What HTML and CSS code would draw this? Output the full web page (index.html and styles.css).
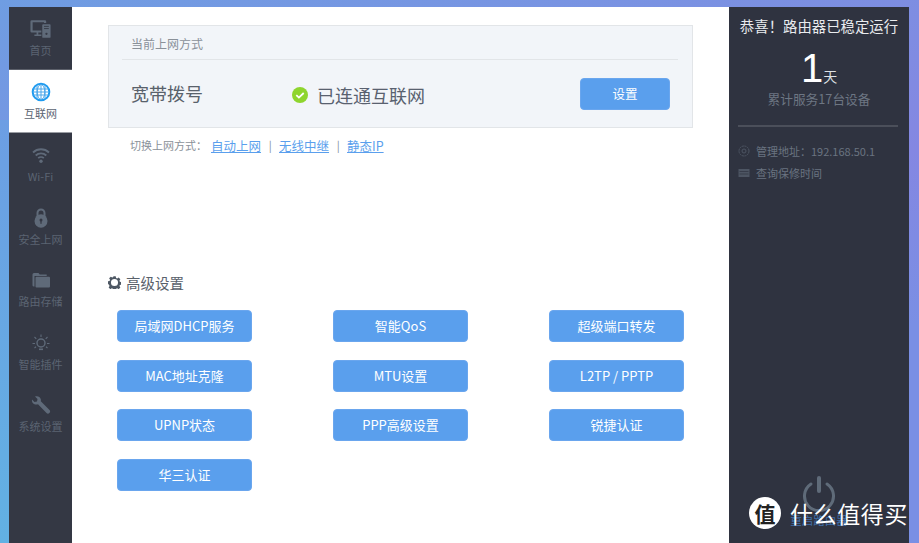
FILE: index.html
```html
<!DOCTYPE html>
<html lang="zh">
<head>
<meta charset="utf-8">
<title>互联网</title>
<link rel="stylesheet" href="styles.css">
</head>
<body>
<div class="app">
  <nav class="side">
    <a class="nav-item">
      <svg class="nav-icon" viewBox="0 0 24 22"><path class="fill" d="M2 1h15a1.500 1.500 0 0 1 1.500 1.500V4H16V3.300H3v9.400h10v2.400H9.500v2.200h3.500v1.700H5v-1.700h2.500v-2.200H2A1.500 1.500 0 0 1 .5 13.500V2.500A1.500 1.500 0 0 1 2 1z"/><path class="fill" d="M15 5.500h7.500a1 1 0 0 1 1 1V20a1 1 0 0 1-1 1H15a1 1 0 0 1-1-1V6.500a1 1 0 0 1 1-1z"/><path d="M16 8h5.500M16 10.500h5.500" stroke="#343844" stroke-width="1"/><circle cx="18.800" cy="16.500" r="1.300" fill="#343844"/></svg>
      <span>首页</span>
    </a>
    <a class="nav-item active">
      <svg class="nav-icon" viewBox="0 0 20 20"><circle cx="10" cy="10" r="8.300" fill="none" stroke="#1e9bf0" stroke-width="2"/><g fill="none" stroke="#4ba6ea" stroke-width="1"><ellipse cx="10" cy="10" rx="3.800" ry="7.500"/><path d="M10 2v16M2.500 7h15M2.500 10h15M2.500 13h15M6 3.500v13M14 3.500v13"/></g></svg>
      <span>互联网</span>
    </a>
    <a class="nav-item">
      <svg class="nav-icon" viewBox="0 0 20 20"><g fill="none" stroke="#5f6a79" stroke-width="1.800"><path d="M2 7.500a11.500 11.500 0 0 1 16 0"/><path d="M4.700 10.500a7.500 7.500 0 0 1 10.600 0"/><path d="M7.200 13.200a4 4 0 0 1 5.600 0"/></g><circle cx="10" cy="16.200" r="1.700" fill="#5f6a79"/></svg>
      <span>Wi-Fi</span>
    </a>
    <a class="nav-item">
      <svg class="nav-icon" viewBox="0 0 20 20"><path d="M6.500 9V5a3.500 3.500 0 0 1 7 0v4" fill="none" stroke="#5f6a79" stroke-width="2"/><ellipse class="fill" cx="10" cy="13" rx="6.500" ry="6.800"/><circle cx="10" cy="12" r="1.500" fill="#343844"/><rect x="9.400" y="12" width="1.200" height="3.800" fill="#343844"/></svg>
      <span>安全上网</span>
    </a>
    <a class="nav-item">
      <svg class="nav-icon" viewBox="0 0 20 20"><path class="fill" d="M1.500 4.500A1.500 1.500 0 0 1 3 3h4.500l1.200 1.500h7V6H3.500v10.500h-.7a1.300 1.300 0 0 1-1.300-1.300z"/><rect class="fill" x="4.500" y="6.800" width="14.500" height="10.700" rx="1"/></svg>
      <span>路由存储</span>
    </a>
    <a class="nav-item">
      <svg class="nav-icon" viewBox="0 0 20 20"><circle cx="10" cy="10" r="4" fill="none" stroke="#5f6a79" stroke-width="1.400"/><rect class="fill" x="8" y="15.500" width="4" height="1.600"/><path d="M10 1.500v2.500M3.500 4l1.800 1.800M16.500 4l-1.800 1.800M1.500 10.500h2.500M16 10.500h2.500M3.500 15l1.500-1.200M16.500 15L15 13.800" stroke="#5f6a79" stroke-width="1.100" fill="none"/></svg>
      <span>智能插件</span>
    </a>
    <a class="nav-item">
      <svg class="nav-icon" viewBox="0 0 20 20"><path class="fill" d="M1 4.500l2.500 2.500 2.500-.5.500-2.500L4 1.500c2.500-1 5.200.2 5.800 2.800.2.800.1 1.500 0 2L18.500 15c1 1 .8 2-.1 2.900-.9.900-1.900 1-2.900.1L7 9.300c-3.300 1-6.600-1.200-6-4.800z"/></svg>
      <span>系统设置</span>
    </a>
  </nav>

  <main class="main">
    <section class="card">
      <h2 class="card-title">当前上网方式</h2>
      <div class="card-body">
        <span class="mode">宽带拨号</span>
        <span class="status">
          <svg class="check" viewBox="0 0 16 16"><circle cx="8" cy="8" r="8" fill="#8ed52e"/><path d="M4.300 8.200l2.600 2.400 4.800-4.600" fill="none" stroke="#fff" stroke-width="1.800"/></svg>
          已连通互联网
        </span>
        <button class="btn btn-set">设置</button>
      </div>
    </section>
    <p class="switch">
      <span class="switch-label">切换上网方式：</span>
      <a class="link">自动上网</a><i class="sep">|</i><a class="link">无线中继</a><i class="sep">|</i><a class="link">静态IP</a>
    </p>

    <h3 class="adv-title">
      <svg class="gear" viewBox="0 0 14 14"><path fill="#4d5763" fill-rule="evenodd" d="M5.700.3h2.600l.4 1.800 1.200.5 1.600-1 1.800 1.800-1 1.600.5 1.200 1.700.4v2.600l-1.700.4-.5 1.200 1 1.600-1.800 1.800-1.600-1-1.200.5-.4 1.700H5.700l-.4-1.700-1.200-.5-1.600 1-1.800-1.800 1-1.600-.5-1.200L0 8.300V5.700l1.700-.4.500-1.200-1-1.600L3 .7l1.600 1 1.200-.5zM7 3.200a3.800 3.800 0 1 0 0 7.600 3.800 3.800 0 0 0 0-7.600z"/></svg>
      高级设置
    </h3>
    <div class="adv-grid">
      <button class="btn">局域网DHCP服务</button>
      <button class="btn">智能QoS</button>
      <button class="btn">超级端口转发</button>
      <button class="btn">MAC地址克隆</button>
      <button class="btn">MTU设置</button>
      <button class="btn">L2TP / PPTP</button>
      <button class="btn">UPNP状态</button>
      <button class="btn">PPP高级设置</button>
      <button class="btn">锐捷认证</button>
      <button class="btn">华三认证</button>
    </div>
  </main>

  <aside class="info">
    <h2 class="info-title">恭喜！路由器已稳定运行</h2>
    <div class="days"><b>1</b><span>天</span></div>
    <p class="served">累计服务17台设备</p>
    <hr class="rule">
    <p class="meta">
      <svg class="meta-icon" viewBox="0 0 12 12"><circle cx="6" cy="6" r="5" fill="none" stroke="#4d5563" stroke-width="1" stroke-dasharray="2 .6"/><circle cx="6" cy="6" r="2" fill="none" stroke="#4d5563"/></svg>
      管理地址：192.168.50.1
    </p>
    <p class="meta">
      <svg class="meta-icon" viewBox="0 0 12 12"><rect x=".5" y="2" width="11" height="8" fill="#4d5563"/><path d="M1.500 4.500h9M1.500 7h9" stroke="#2f3340" stroke-width=".7"/></svg>
      查询保修时间
    </p>
    <div class="power">
      <svg class="power-icon" viewBox="0 0 34 38"><path d="M9 9a14.500 14.500 0 1 0 16 0" fill="none" stroke="#5f6b79" stroke-width="3" stroke-linecap="round"/><path d="M17 3v13" stroke="#5f6b79" stroke-width="4" stroke-linecap="round"/></svg>
      <span class="reboot">重启路由器</span>
    </div>
  </aside>

  <div class="mark">
    <span class="mark-logo">值</span>
    <span class="mark-text">什么值得买</span>
  </div>
</div>
</body>
</html>
```

FILE: styles.css
```css
* { box-sizing: border-box; }
html, body { margin: 0; height: 100%; overflow: hidden; }
body {
  font-family: "Noto Sans CJK SC", "Noto Sans", sans-serif;
}
.app {
  position: relative;
  display: flex;
  width: 919px;
  height: 543px;
  padding: 7px 10px 0 9px;
  background: linear-gradient(160deg, #6f9de2 0%, #8487e2 55%, #7a8fe4 75%), #7b8fe2;
  overflow: hidden;
}
.app::before {
  content: "";
  position: absolute;
  left: 0; top: 120px; bottom: 0;
  width: 9px;
  background: linear-gradient(180deg, #6c9ee3, #62b1e3);
}
.side {
  position: relative;
  width: 63px;
  flex: none;
  background: #343844;
}
.nav-item {
  display: flex;
  flex-direction: column;
  align-items: center;
  height: 62.500px;
  padding-top: 12px;
  font-size: 11px;
  line-height: 14px;
  color: #5b6472;
}
.nav-item:first-child { height: 63px; border-bottom: 1px solid #5c606a; }
.nav-item.active {
  height: 63px;
  background: #fff;
  color: #5b6472;
  border-bottom: 1px solid #9a9da3;
}
.nav-icon { width: 20px; height: 20px; margin-bottom: 4px; }
.nav-item:first-child .nav-icon { width: 21px; }
.fill { fill: #5f6a79; }
.main {
  flex: none;
  width: 657px;
  background: #fff;
  padding: 18px 36px 0;
}
.card {
  width: 585px;
  height: 103px;
  background: #f2f5f9;
  border: 1px solid #e2e5e8;
  padding: 0 14px 0 13px;
}
.card-title {
  margin: 0;
  height: 34px;
  padding: 9px 9px 0;
  font-size: 12px;
  font-weight: 400;
  line-height: 17px;
  color: #8a9199;
  border-bottom: 1px solid #e2e5e8;
}
.card-body {
  position: relative;
  display: flex;
  align-items: center;
  height: 68px;
  padding: 0 9px;
}
.mode {
  width: 161px;
  margin-bottom: 3px;
  font-size: 18px;
  color: #59616b;
}
.status {
  display: flex;
  align-items: center;
  gap: 9px;
  margin-top: 1px;
  font-size: 18px;
  color: #59616f;
}
.check { width: 16px; height: 16px; }
.btn {
  display: block;
  width: 135px;
  height: 32px;
  padding: 0;
  border: 1px solid #6aa6ee;
  border-radius: 4px;
  background: #5a9fed;
  color: #fff;
  font-family: inherit;
  font-size: 13px;
  line-height: 28px;
}
.btn-set {
  width: 90px;
  height: 32px;
  margin-left: auto;
  margin-right: -1px;
  margin-top: -1px;
  font-size: 12.500px;
}
.switch {
  display: flex;
  align-items: center;
  margin: 8px 0 0 22px;
  height: 18px;
  font-size: 11px;
  color: #8a9199;
}
.switch-label { width: 81px; }
.link {
  font-size: 12.500px;
  color: #5a9fed;
  text-decoration: underline;
  text-underline-offset: 1px;
}
.sep {
  width: 17.500px;
  text-align: center;
  font-style: normal;
  font-size: 11px;
  color: #7f8a96;
  margin-left: .5px;
}
.adv-title {
  display: flex;
  align-items: center;
  gap: 5px;
  margin: 118px 0 0;
  height: 20px;
  font-size: 14.500px;
  font-weight: 400;
  color: #59616b;
}
.gear { width: 13px; height: 13px; }
.adv-grid {
  display: grid;
  grid-template-columns: repeat(3, 135px);
  column-gap: 81px;
  row-gap: 17.500px;
  margin: 18px 0 0 9px;
}
.info {
  position: relative;
  flex: none;
  width: 180px;
  background: #2f3340;
  padding: 9px 0 0;
}
.info-title {
  margin: 0;
  text-align: center;
  font-size: 14.400px;
  font-weight: 400;
  line-height: 20px;
  color: #e9ebee;
  white-space: nowrap;
}
.days {
  display: flex;
  align-items: baseline;
  justify-content: center;
  height: 42px;
  margin-top: 11px;
  color: #fff;
}
.days b {
  font-family: "Liberation Sans", sans-serif;
  font-weight: 400;
  font-size: 40px;
  line-height: 42px;
}
.days span { font-size: 14px; color: #dfe2e6; }
.served {
  margin: 2px 0 0;
  text-align: center;
  font-size: 12.700px;
  line-height: 16px;
  color: #6d7683;
}
.rule {
  margin: 18px 11px 0 9px;
  border: 0;
  height: 2px;
  background: #4b4f5a;
}
.meta {
  display: flex;
  align-items: center;
  margin: 0;
  padding-left: 9px;
  height: 22px;
  font-size: 11px;
  color: #6a7380;
}
.rule + .meta { margin-top: 13px; }
.meta-icon { width: 12px; height: 12px; margin-right: 6px; }
.power {
  position: absolute;
  left: 0; right: 0; top: 468px;
  display: flex;
  flex-direction: column;
  align-items: center;
}
.power-icon { width: 34px; height: 38px; }
.reboot { font-size: 11.500px; line-height: 15px; color: #3f6faa; }
.mark {
  position: absolute;
  left: 749px;
  top: 497px;
  display: flex;
  align-items: center;
  gap: 9px;
}
.mark-logo {
  display: flex;
  align-items: center;
  justify-content: center;
  width: 32px;
  height: 32px;
  border-radius: 50%;
  background: #fff;
  color: #222;
  font-weight: 700;
  font-size: 21px;
}
.mark-text {
  font-size: 23px;
  line-height: 32px;
  letter-spacing: .6px;
  color: #fff;
}
```
